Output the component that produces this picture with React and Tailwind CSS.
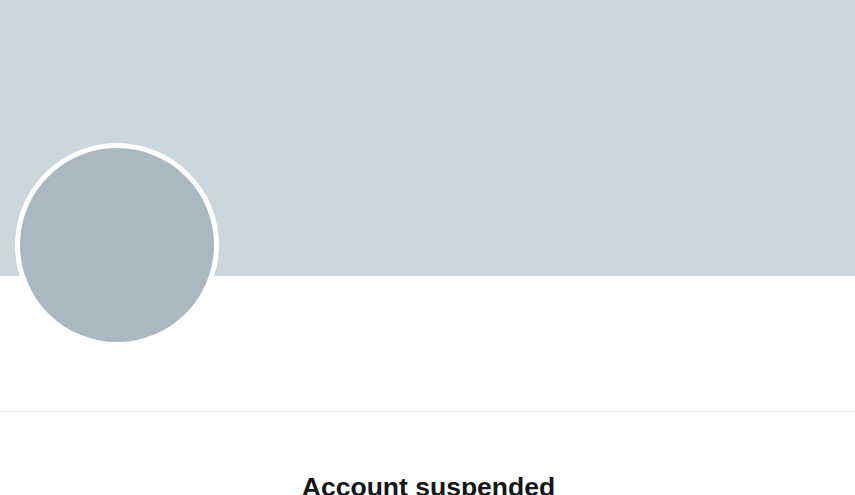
export default function App() {
  return (
    <div className="w-[855px] h-[495px] overflow-hidden bg-white" style={{ fontFamily: '"Liberation Sans", Arial, sans-serif' }}>
      {/* header banner */}
      <div className="h-[276px] bg-[#ccd6dd]" />
      {/* avatar overlapping the banner */}
      <div className="flex h-[135px] pl-[15px]">
        <div className="-mt-[133px] w-[204px] h-[204px] shrink-0 rounded-full bg-white p-[5px]">
          <div className="w-full h-full rounded-full bg-[#aab8c2]" />
        </div>
      </div>
      <div className="h-px bg-[#e6ecf0]" />
      <div className="pt-[62px] flex justify-center">
        <h1 className="text-[26.5px] leading-[27px] font-bold text-[#14171a] pl-[2px]">Account suspended</h1>
      </div>
    </div>
  );
}
